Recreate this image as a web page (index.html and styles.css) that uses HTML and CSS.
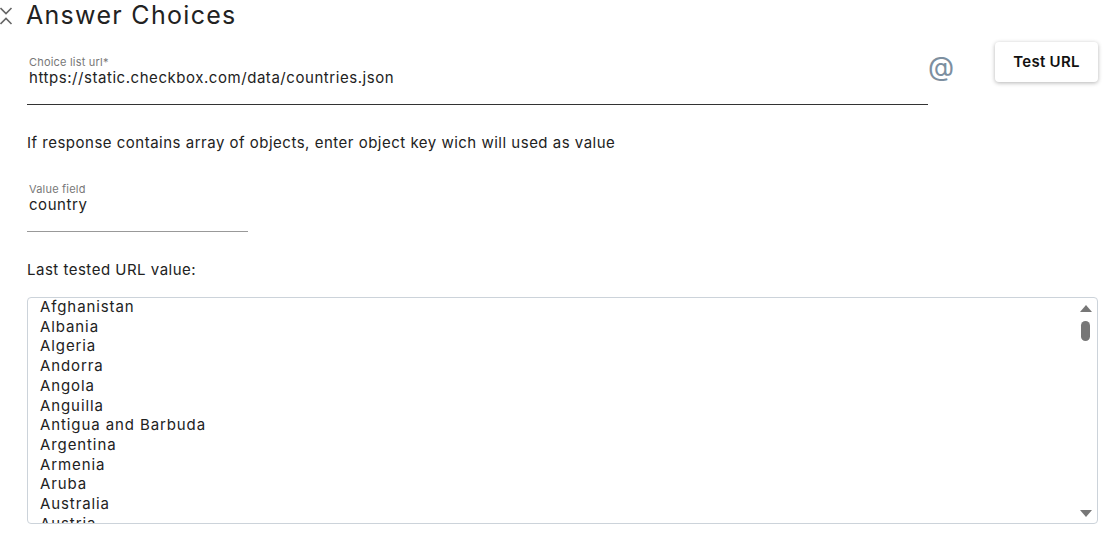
FILE: index.html
```html
<!DOCTYPE html>
<html lang="en">
<head>
  <meta charset="UTF-8" />
  <title>Answer Choices</title>
  <link rel="stylesheet" href="styles.css">
</head>
<body>
  <section class="panel">
    <header class="panel-head">
      <svg class="collapse" width="14" height="22" viewBox="0 0 14 22">
        <path d="M1.5 4 L7 9.5 L12.5 4 M1.5 20 L7 14.5 L12.5 20" fill="none" stroke="#666" stroke-width="1.6"/>
      </svg>
      <h2>Answer Choices</h2>
    </header>

    <div class="url-row">
      <div class="field field-url">
        <label>Choice list url*</label>
        <div class="field-value">https://static.checkbox.com/data/countries.json</div>
      </div>
      <span class="at">@</span>
      <button class="btn-test">Test URL</button>
    </div>

    <p class="hint">If response contains array of objects, enter object key wich will used as value</p>

    <div class="field field-key">
      <label>Value field</label>
      <div class="field-value">country</div>
    </div>

    <p class="hint last">Last tested URL value:</p>

    <div class="listbox">
      <ul class="items">
        <li>Afghanistan</li>
        <li>Albania</li>
        <li>Algeria</li>
        <li>Andorra</li>
        <li>Angola</li>
        <li>Anguilla</li>
        <li>Antigua and Barbuda</li>
        <li>Argentina</li>
        <li>Armenia</li>
        <li>Aruba</li>
        <li>Australia</li>
        <li>Austria</li>
      </ul>
      <div class="scrollbar">
        <span class="arrow up"></span>
        <span class="thumb"></span>
        <span class="track"></span>
        <span class="arrow down"></span>
      </div>
    </div>
  </section>
</body>
</html>
```

FILE: styles.css
```css
body {
  margin: 0;
  font-family: Inter, "Open Sans", sans-serif;
  color: #222;
  background: #fff;
}

.panel {
  padding: 0 18px 0 27px;
}

.panel-head {
  display: flex;
  align-items: center;
  gap: 13px;
  height: 30px;
  margin-left: -27px;
}

.collapse {
  display: block;
  margin-left: -1px;
}

.panel-head h2 {
  margin: 0;
  font-size: 25px;
  line-height: 28px;
  font-weight: 400;
  letter-spacing: 1.3px;
  color: #222;
}

.url-row {
  display: flex;
  align-items: flex-start;
  margin-top: 12px;
}

.field label {
  display: block;
  font-size: 11px;
  color: #777;
  padding-left: 2px;
  line-height: 13px;
  letter-spacing: 0.2px;
}

.field-value {
  font-size: 15px;
  letter-spacing: 0.55px;
  line-height: 18px;
  color: #222;
  padding-left: 2px;
  height: 35px;
  border-bottom: 1px solid #333;
}

.field-url {
  width: 901px;
  margin-top: 14px;
}

.at {
  width: 25px;
  margin-top: 8px;
  font-size: 27px;
  line-height: 34px;
  color: #7d8fa0;
  text-align: center;
}

.btn-test {
  margin-left: 42px;
  width: 103px;
  height: 40px;
  padding: 0 0 2px;
  border: 0;
  border-radius: 4px;
  background: #fff;
  box-shadow: 0 1px 4px rgba(0, 0, 0, 0.3);
  font-family: inherit;
  font-size: 15px;
  font-weight: 600;
  letter-spacing: 0.3px;
  color: #111;
}

.hint {
  margin: 28px 0 0;
  font-size: 15px;
  letter-spacing: 0.5px;
  line-height: 19px;
}

.field-key {
  width: 221px;
  margin-top: 31px;
}

.field-key .field-value {
  border-bottom-color: #999;
}

.hint.last {
  margin-top: 28px;
}

.listbox {
  display: flex;
  height: 225px;
  margin-top: 18px;
  border: 1px solid #ccd3da;
  border-radius: 4px;
  overflow: hidden;
}

.items {
  flex: 1;
  margin: -1px 0 0;
  padding: 0 0 0 12px;
  list-style: none;
  overflow: hidden;
}

.items li {
  font-size: 15px;
  letter-spacing: 0.9px;
  line-height: 19.7px;
}

.scrollbar {
  display: flex;
  flex-direction: column;
  align-items: center;
  width: 17px;
  padding: 7px 0 6px;
  margin-right: 3px;
}

.arrow {
  width: 0;
  height: 0;
  border-left: 6px solid transparent;
  border-right: 6px solid transparent;
}

.arrow.up {
  border-bottom: 7px solid #777;
}

.arrow.down {
  border-top: 7px solid #777;
}

.thumb {
  width: 9px;
  height: 20px;
  margin-top: 9px;
  border-radius: 5px;
  background: #777;
}

.track {
  flex: 1;
}
```
